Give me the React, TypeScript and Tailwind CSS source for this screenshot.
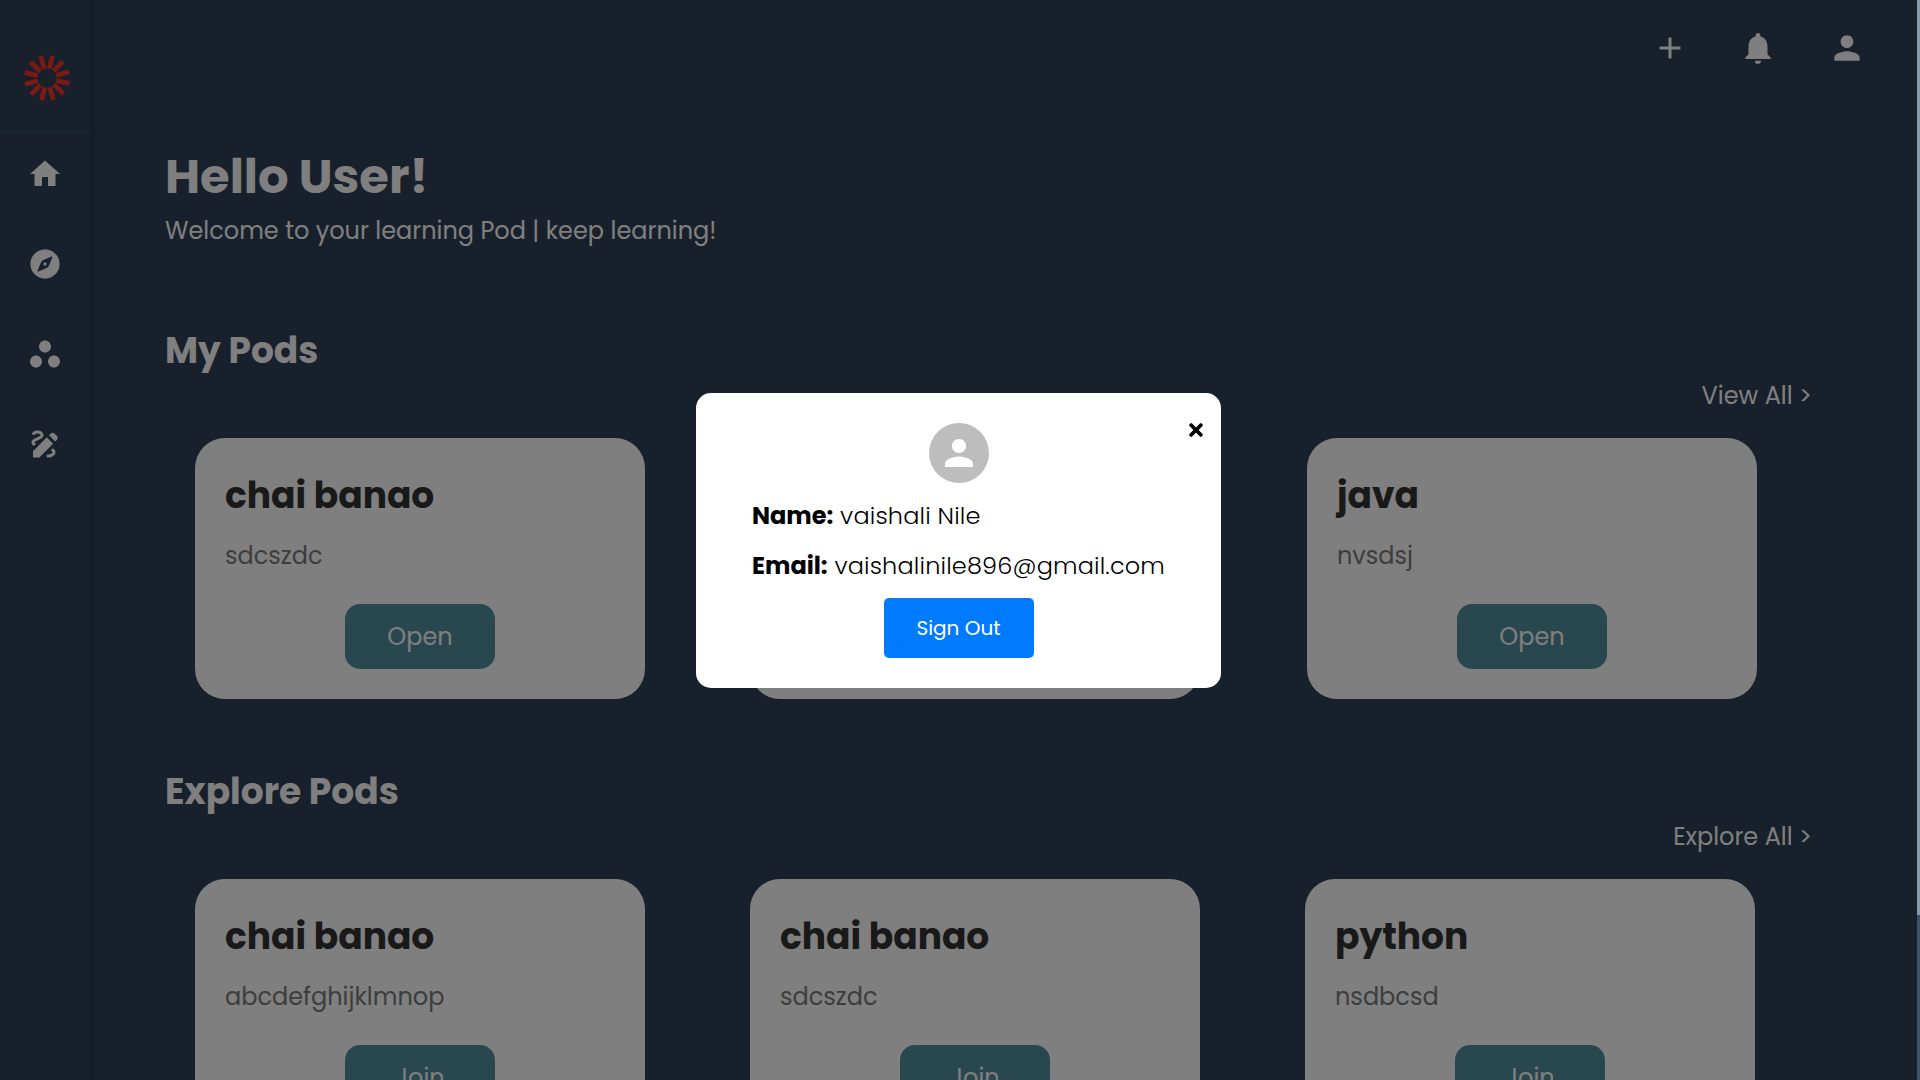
import React from 'react';
import { MdHome, MdWorkspaces, MdDraw, MdNotifications, MdPerson, MdAdd } from 'react-icons/md';
import { IoCompass } from 'react-icons/io5';
import { FaTimes } from 'react-icons/fa';

const myPods = [
  { title: 'chai banao', description: 'sdcszdc', box: 'ml-[30px] mr-[105px]' },
  { title: 'chai banao', description: 'sdcszdc', box: 'mr-[107px]' },
  { title: 'java', description: 'nvsdsj', box: '' },
];

const explorePods = [
  { title: 'chai banao', description: 'abcdefghijklmnop', box: 'ml-[30px] mr-[105px]' },
  { title: 'chai banao', description: 'sdcszdc', box: 'mr-[105px]' },
  { title: 'python', description: 'nsdbcsd', box: '' },
];

function Logo() {
  const rays = Array.from({ length: 12 }, (_, i) => i * 30 + 14);
  return (
    <svg width="48" height="48" viewBox="0 0 48 48">
      {rays.map((angle) => (
        <rect key={angle} x="21.6" y="1" width="4.8" height="13.5" fill="#f0342a" transform={`rotate(${angle} 24 24)`} />
      ))}
    </svg>
  );
}

function PodCard({ title, description, action, box }: { title: string; description: string; action: string; box: string }) {
  return (
    <div className={`w-[450px] h-[261px] shrink-0 bg-white rounded-[30px] pt-[32px] px-[30px] ${box}`}>
      <h3 className="text-[36px] leading-[52px] font-bold text-[#333]">{title}</h3>
      <p className="mt-[16px] text-[24px] leading-[36px] text-[#7a7a7a]">{description}</p>
      <div className="flex justify-center mt-[30px]">
        <button className="w-[150px] h-[65px] rounded-[15px] bg-[#528f9f] text-[#fff] text-[24px]">{action}</button>
      </div>
    </div>
  );
}

export default function App() {
  return (
    <div className="relative h-screen overflow-hidden flex bg-[#2e4056] font-['Poppins','Inter',sans-serif]">
      <aside className="w-[90px] shrink-0 flex flex-col items-center bg-[#2e4056] shadow-[2px_0_14px_rgba(0,0,0,0.12)]">
        <div className="w-full h-[132px] flex items-center justify-center pl-[4px] pt-[24px] border-b border-[#2c5a52]">
          <Logo />
        </div>
        <nav className="flex flex-col items-center gap-[54px] mt-[24px] text-white">
          <MdHome size={36} />
          <IoCompass size={36} />
          <MdWorkspaces size={36} />
          <MdDraw size={36} />
        </nav>
      </aside>

      <main className="flex-1 min-w-0 pl-[75px]">
        <div className="flex justify-end items-center gap-[51px] h-[96px] pr-[51px] text-white">
          <MdAdd size={36} />
          <MdNotifications size={38} />
          <MdPerson size={38} />
        </div>
        <h1 className="mt-[49px] text-[48px] leading-[64px] font-bold text-white">Hello User!</h1>
        <p className="mt-[4px] text-[24px] leading-[36px] text-white">Welcome to your learning Pod | keep learning!</p>

        <h2 className="mt-[75px] text-[36px] leading-[54px] font-bold text-white">My Pods</h2>
        <div className="flex justify-end pr-[105px] text-[24px] leading-[36px] text-white">View All &gt;</div>
        <div className="flex mt-[24px]">
          {myPods.map((pod, i) => (
            <PodCard key={i} {...pod} action="Open" />
          ))}
        </div>

        <h2 className="mt-[66px] text-[36px] leading-[54px] font-bold text-white">Explore Pods</h2>
        <div className="flex justify-end pr-[105px] text-[24px] leading-[36px] text-white">Explore All &gt;</div>
        <div className="flex mt-[24px]">
          {explorePods.map((pod, i) => (
            <PodCard key={i} {...pod} action="Join" />
          ))}
        </div>
      </main>

      <div className="w-[3px] shrink-0" />

      <div className="absolute inset-0 bg-black/50" />

      <div className="absolute right-0 top-0 bottom-0 w-[3px] flex flex-col">
        <div className="h-[915px] bg-[#8a97a8]" />
        <div className="flex-1 bg-[#3f5064]" />
      </div>

      <div className="absolute left-[696px] top-[393px] w-[525px] h-[295px] bg-white rounded-[15px] pt-[30px] pl-[56px] pr-[54px] text-black">
        <FaTimes size={20} className="absolute right-[15px] top-[27px]" />
        <div className="flex justify-center -ml-[2px]">
          <div className="w-[60px] h-[60px] rounded-full bg-[#bdbdbd] flex items-center justify-center text-white">
            <MdPerson size={42} />
          </div>
        </div>
        <p className="mt-[15px] text-[24px] leading-[36px] font-light tracking-[0.16px]"><strong className="font-bold tracking-normal">Name:</strong> vaishali Nile</p>
        <p className="mt-[14px] text-[24px] leading-[36px] font-light tracking-[0.16px] whitespace-nowrap"><strong className="font-bold tracking-normal">Email:</strong> vaishalinile896@gmail.com</p>
        <div className="flex justify-center mt-[14px] -ml-[2px]">
          <button className="w-[150px] h-[60px] rounded-[5px] bg-[#007bff] text-white text-[20px]">Sign Out</button>
        </div>
      </div>
    </div>
  );
}
